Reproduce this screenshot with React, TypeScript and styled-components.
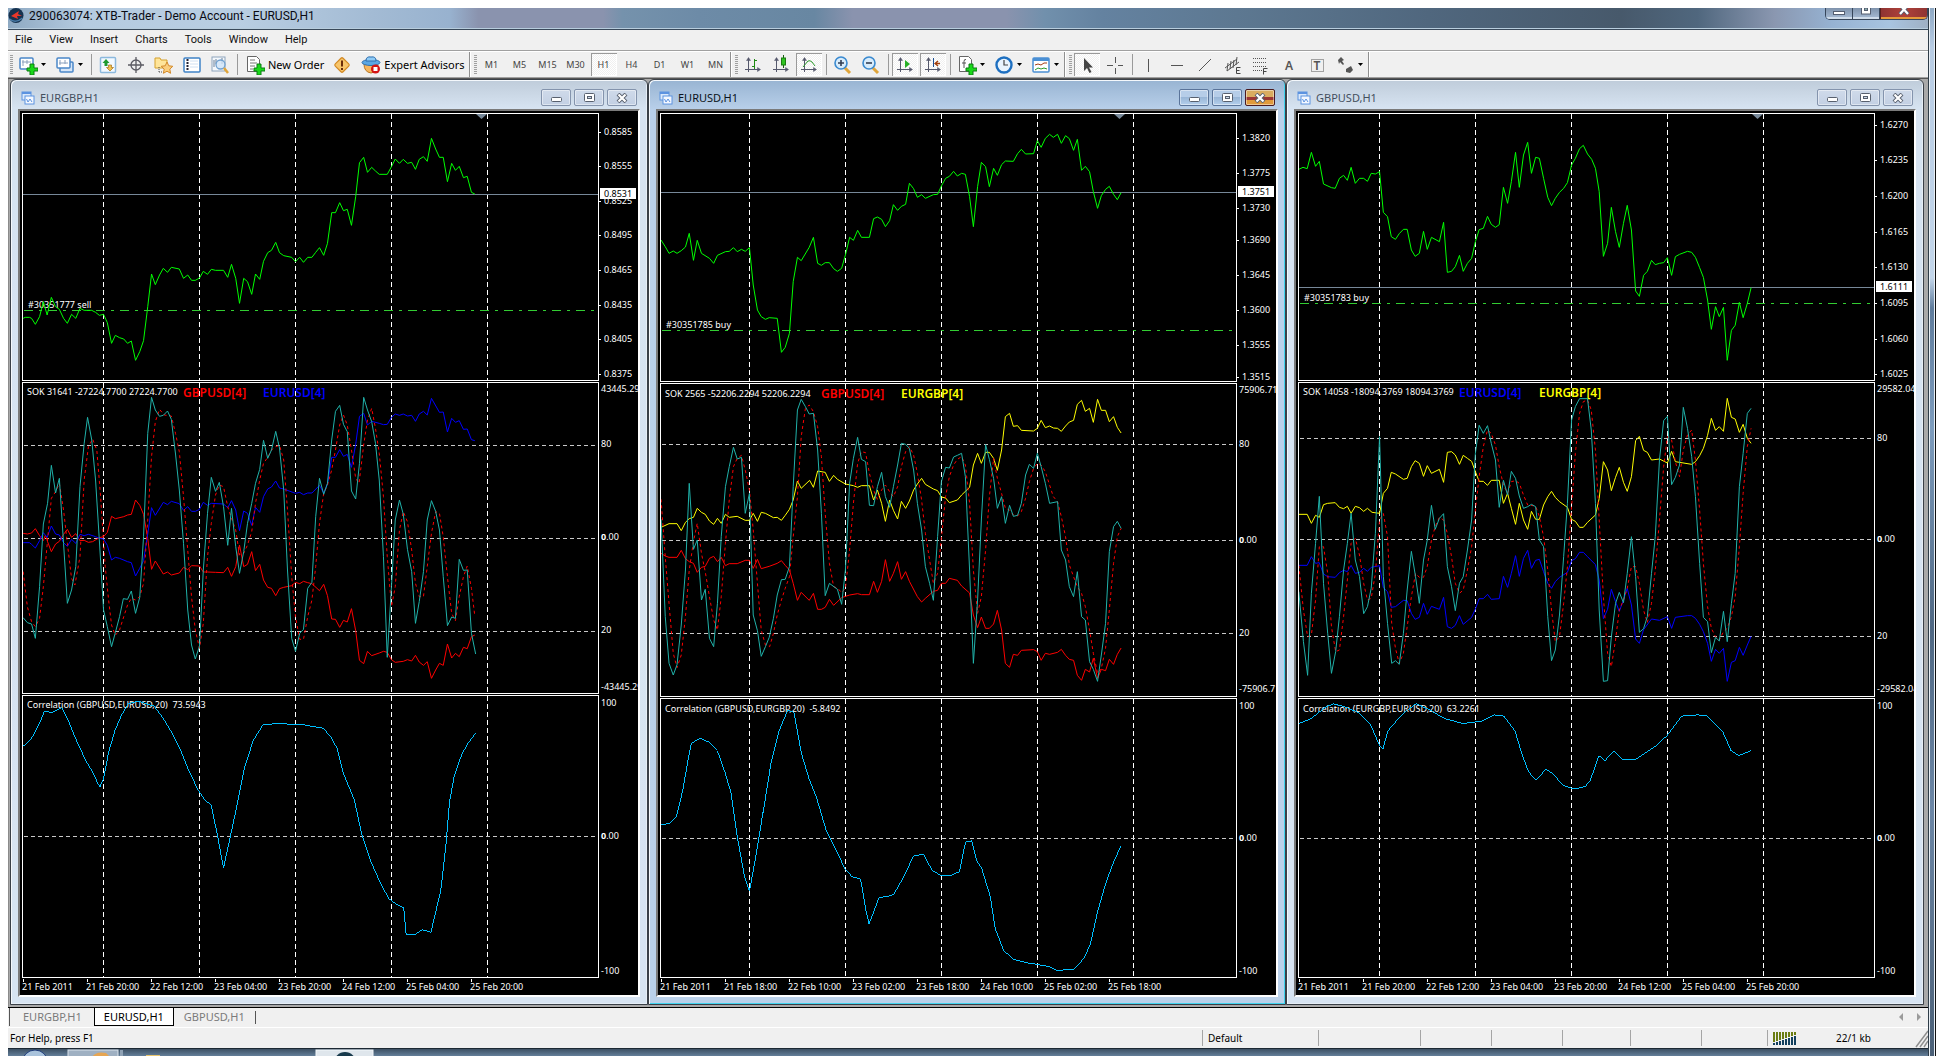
import React from 'react';
import styled, { createGlobalStyle, css } from 'styled-components';

const UI = '"Noto Sans", "Open Sans", sans-serif';

const GlobalStyle = createGlobalStyle`
  * { box-sizing: border-box; }
  body { margin: 0; background: #fff; font-family: ${UI}; overflow: hidden; }
  button { font: inherit; color: inherit; margin: 0; padding: 0; border: 0; background: none; }
`;

/* ---------- window shell ---------- */

const Page = styled.div`
  display: flex;
  padding: 8px 0 0 8px;
`;

const Main = styled.main`
  flex: 1;
  min-width: 0;
  display: flex;
  flex-direction: column;
`;

const Edge = styled.div`
  width: 8px;
  border-left: 1px solid #2f3d48;
  border-right: 1px solid #111;
  background: linear-gradient(#8fa9c4 0, #b9cde4 40px, #c3d6ea 270px, #5f7c9c 300px, #7e9dbe 420px, #4f6883 620px, #6c87a6 800px, #4b6077 100%);
  box-shadow: inset 1px 0 #e9eff5, inset -1px 0 #e9eff5;
`;

const TitleBar = styled.header`
  display: flex;
  justify-content: space-between;
  align-items: flex-start;
  height: 22px;
  border-bottom: 1px solid #39495a;
  box-shadow: inset 0 -1px #b8cddd;
  background: linear-gradient(90deg, #8ea9c2 0, #b5cbe0 4%, #b9cee2 12%, #a3bbd4 19%, #98b2cf 23%, #8a93ae 24.5%, #8a93ae 31%, #7592ac 32%, #6d8ba7 36%, #6887a2 42%, #8a93ae 44%, #8a93ae 52%, #7190ac 54%, #6482a0 57%, #5d7891 64%, #50677e 74%, #47596b 84%, #50677e 88%, #8a97b0 92%, #96b2d2 95%, #a8c4e0 98%, #9fb0c4 100%);
`;

const AppTitle = styled.h1`
  display: flex;
  align-items: center;
  gap: 4px;
  margin: 0;
  height: 15px;
  font: 400 12px Roboto, "Noto Sans", sans-serif;
  color: #0a0a12;
`;

const WindowButtons = styled.div`
  display: flex;
  height: 12px;
  border: 1px solid #37465a;
  border-top: 0;
  border-radius: 0 0 5px 5px;
  overflow: hidden;
`;

const FrameButton = styled.button<{ $close?: boolean }>`
  display: flex;
  justify-content: center;
  width: ${p => (p.$close ? 47 : 27)}px;
  border-left: ${p => (p.$close ? 1 : 0)}px solid #5b1f1c;
  border-right: ${p => (p.$close ? 0 : 1)}px solid #37465a;
  background: ${p => (p.$close ? 'linear-gradient(90deg, #8f3432, #b0413a 50%, #8f3432)' : 'linear-gradient(#7f93ac, #a9bdd6)')};
  box-shadow: inset 0 -2px ${p => (p.$close ? '#e59a3a' : '#cfdcea')};
`;

const MenuBar = styled.nav`
  display: flex;
  height: 22px;
  padding: 0 0 2px 7px;
  background: #f0f0f0;
  border-bottom: 1px solid #fff;
  box-shadow: inset 0 -1px #a0a0a0;
`;

const MenuItem = styled.button`
  margin-right: 16px;
  padding-right: 1px;
  font: 11px/20px Roboto, "Noto Sans", sans-serif;
  color: #111;
`;

/* ---------- toolbar ---------- */

const ToolBar = styled.div`
  display: flex;
  align-items: center;
  height: 27px;
  background: #f0f0f0;
  border-bottom: 1px solid #555;
  box-shadow: inset 0 -1px #a0a0a0;
  padding-bottom: 1px;
`;

const Grip = styled.span`
  width: 6px;
  height: 20px;
  flex: none;
  background: repeating-linear-gradient(#a0a0a0 0 1px, #f0f0f0 1px 2px) 2px 0 / 3px 100% no-repeat;
`;

const Divider = styled.span`
  width: 6px;
  height: 21px;
  flex: none;
  background: linear-gradient(#9a9a9a, #9a9a9a) 3px 0 / 1px 100% no-repeat;
`;

const GroupEnd = styled.span`
  width: 3px;
  height: 25px;
  flex: none;
  border-left: 1px solid #8f8f8f;
  box-shadow: inset 1px 0 #fff;
`;

const pressed = css`
  background: repeating-conic-gradient(#fff 0 25%, #f0f0f0 0 50%) 0 0 / 2px 2px;
  box-shadow: inset 1px 1px #9a9a9a, inset -1px -1px #fff;
`;

const Tool = styled.button<{ $on?: boolean }>`
  display: flex;
  align-items: center;
  justify-content: center;
  flex: none;
  width: 26px;
  height: 23px;
  margin: 0 1px;
  ${p => p.$on && pressed}
`;

const Period = styled(Tool)`
  font-size: 9px;
  color: #444;
`;

const DropTool = styled.button`
  display: flex;
  align-items: center;
  flex: none;
  gap: 3px;
  width: 37px;
  height: 23px;
  padding-left: 4px;
`;

const LabelTool = styled.button`
  display: flex;
  align-items: center;
  flex: none;
  gap: 3px;
  height: 23px;
  padding: 0 4px 0 5px;
  font-size: 11px;
  color: #000;
`;

/* ---------- chart windows ---------- */

const Desk = styled.section`
  display: grid;
  grid-template-columns: repeat(3, minmax(0, 1fr));
  padding: 0 4px 2px 2px;
  background: linear-gradient(90deg, #8b8b8b 1px, transparent 1px), linear-gradient(#a9a9a9, #a9a9a9);
`;

const ChartWindow = styled.article<{ $active?: boolean }>`
  padding: 0 7px 7px;
  border: 1px solid #3a4048;
  border-radius: 6px 6px 0 0;
  background: ${p => (p.$active
    ? 'linear-gradient(#98b4d2 0, #b9d0ea 30px, #bad1ea 100%)'
    : 'linear-gradient(#bfccda 0, #d6e3f1 28px, #d7e4f2 100%)')};
  box-shadow: inset 1px 1px #f4f8fc, inset -1px -1px ${p => (p.$active ? '#3fd4ee' : '#e6eef6')};
`;

const ChartHeader = styled.header`
  display: flex;
  align-items: center;
  gap: 3px;
  height: 29px;
  padding: 6px 3px 0 3px;
`;

const ChartTitle = styled.h2<{ $active?: boolean }>`
  flex: 1;
  margin: 0;
  padding-left: 2px;
  font-size: 11px;
  line-height: 16px;
  font-weight: 400;
  color: ${p => (p.$active ? '#0b1320' : '#44505e')};
`;

const MdiButton = styled.button<{ $tone: 'idle' | 'live' | 'close' }>`
  display: flex;
  align-items: center;
  justify-content: center;
  width: 30px;
  height: 17px;
  border: 1px solid ${p => (p.$tone === 'close' ? '#4a1a20' : p.$tone === 'live' ? '#5a749a' : '#8494ad')};
  border-radius: 2px;
  background: ${p => (p.$tone === 'close'
    ? 'linear-gradient(#d9ac60 0 45%, #9c3733 45% 68%, #e09a3c 68%)'
    : p.$tone === 'live'
      ? 'linear-gradient(#b6cde8 0 48%, #98b5d6 48%, #b4cfec)'
      : 'linear-gradient(#cfdaea, #c3d0e3)')};
  box-shadow: inset 0 0 0 1px rgba(255, 255, 255, 0.45);
`;

const Client = styled.div`
  display: flex;
  flex-direction: column;
  gap: 1px;
  padding: 2px 0 0 2px;
  background: #000;
  border: 2px solid;
  border-color: #7a7a7a #fff #fff #7a7a7a;
`;

const Panel = styled.div<{ $h: number }>`
  display: grid;
  grid-template-columns: minmax(0, 1fr) 39px;
  height: ${p => p.$h}px;
`;

const Plot = styled.svg`
  display: block;
  width: 100%;
  height: 100%;
  border: 1px solid #fff;
`;

const Axis = styled.svg`
  display: block;
  width: 39px;
  height: 100%;
`;

const Small = styled.text<{ $dark?: boolean }>`
  font: 9px ${UI};
  fill: ${p => (p.$dark ? '#000' : '#fff')};
`;

const Legend = styled.text`
  font: 600 12px ${UI};
`;

const DateRow = styled.div`
  display: flex;
  height: 16px;
  font-size: 9px;
  line-height: 16px;
  color: #fff;
`;

const DateLabel = styled.span`
  width: 64px;
  white-space: nowrap;
  background: linear-gradient(#fff, #fff) 1px 0 / 1px 3px no-repeat;
`;

/* ---------- bottom ---------- */

const Tabs = styled.nav`
  display: flex;
  align-items: flex-start;
  height: 21px;
  padding-left: 1px;
  border-top: 1px solid #000;
  border-bottom: 1px solid #fff;
  background: #f0f0f0;
`;

const Tab = styled.button<{ $active?: boolean }>`
  height: 18px;
  padding: 0 10px 2px;
  font-size: 11px;
  line-height: 15px;
  color: #7b7b7b;
  &:first-child { padding: 0 12px 2px 13px; border-left: 1px solid #555; }
  ${p => p.$active && css`
    color: #000;
    background: #fff;
    border: solid #000;
    border-width: 0 1px 1px;
    padding: 0 9px 1px;
  `}
`;

const TabLine = styled.span`
  width: 1px;
  height: 13px;
  margin: 3px auto 0 0;
  background: #555;
`;

const TabScroll = styled.div`
  display: flex;
  gap: 9px;
  padding: 5px 5px 0 0;
  button { display: flex; }
`;

const StatusBar = styled.footer`
  display: flex;
  align-items: center;
  height: 21px;
  background: #f0f0f0;
  font-size: 10px;
  color: #000;
  border-bottom: 1px solid #1c2833;
`;

const StatusCell = styled.div<{ $w: number }>`
  display: flex;
  align-items: center;
  width: ${p => p.$w}px;
  height: 16px;
  padding-left: 5px;
  border-left: 1px solid #a5a5a5;
`;

const StatusHint = styled.div`
  flex: 1;
  padding-left: 2px;
`;

const Traffic = styled.span`
  margin-left: 38px;
`;

const TaskBar = styled.div`
  display: flex;
  height: 8px;
  overflow: hidden;
  background: linear-gradient(#3c5063, #6985a1);
`;

/* ---------- icons ---------- */

const Svg = ({ children, w = 20, h = 20 }: { children: React.ReactNode; w?: number; h?: number }) => (
  <svg width={w} height={h} viewBox={`0 0 ${w} ${h}`} fill="none" aria-hidden="true">{children}</svg>
);

const Plus = () => <path d="M12 9h4v4h4v3h-4v4h-4v-4H9v-3h3z" fill="#19d819" stroke="#0b7d12" />;
const AxisArrows = () => (
  <g stroke="#55586c"><path d="M5.500 3v14M2 14.500h15" /><path d="M3.500 5.500l2-3 2 3zM14.500 12.500l3 2-3 2z" fill="#55586c" strokeWidth=".5" /></g>
);
const Caret = () => <svg width="5" height="3" aria-hidden="true"><path d="M0 0h5L2.500 3z" fill="#000" /></svg>;

const icons: Record<string, React.ReactNode> = {
  newChart: <><rect x="2" y="3" width="13" height="11" rx="1" fill="#fff" stroke="#4a86c8" strokeWidth="1.500" /><path d="M5 5v6M4 7h9M9 5v4" stroke="#8aa0bd" /><Plus /></>,
  profiles: <><rect x="5" y="7" width="13" height="10" rx="1" fill="#d6e6f8" stroke="#4a86c8" strokeWidth="1.500" /><rect x="2" y="3" width="13" height="10" rx="1" fill="#fff" stroke="#4a86c8" strokeWidth="1.500" /><path d="M5 5v5M4 8h9M10 5v4" stroke="#8aa0bd" /></>,
  market: <><rect x="2.500" y="2.500" width="15" height="15" rx="1" fill="#f2f9ff" stroke="#8cb9dd" strokeWidth="1.500" /><path d="M8 4l3.500 4H9.500v3h-3V8h-2z" fill="#1c9a2e" /><path d="M12 16l-3.500-3.500h2V10h3v2.500h2z" fill="#f2c14e" stroke="#a5701a" strokeWidth=".7" /></>,
  cross: <g stroke="#5b5b63" strokeWidth="1.300"><circle cx="10" cy="10" r="5" /><path d="M10 2v16M2 10h16" /></g>,
  navigator: <><path d="M1 3h5l1 2h6v8H1z" fill="#ffe59a" stroke="#d5a12d" /><path d="M5 12v5M5 17h3" stroke="#555" strokeDasharray="1 1" /><path d="M13 7l1.800 3.800 4 .5-3 2.800.8 4.200-3.600-2.100-3.600 2.100.8-4.200-3-2.800 4-.5z" fill="#fbcf7e" stroke="#d38a2b" /></>,
  terminal: <><rect x="2" y="3" width="16" height="14" rx="1" fill="#fff" stroke="#3f82c6" strokeWidth="1.500" /><path d="M5.500 4v12" stroke="#222233" strokeWidth="2" strokeDasharray="2 1" /><path d="M8 6h8M8 9h8M8 12h8" stroke="#cfe0f2" /></>,
  tester: <><rect x="2" y="2" width="13" height="14" fill="#f4f8fc" stroke="#8ea4bb" /><path d="M4 5v7M6 4v5M12 3v6" stroke="#6c8098" /><circle cx="10.500" cy="9.500" r="4.500" fill="#cfe4f8cc" stroke="#6fa0cf" strokeWidth="1.300" /><path d="M14 13l4 5" stroke="#e0a53a" strokeWidth="2.500" /></>,
  order: <><path d="M2.500 1.500h9l3 3v12h-12z" fill="#fff" stroke="#666" /><path d="M5 5h5M5 8h7M5 11h5M5 14h3" stroke="#777" /><Plus /></>,
  warn: <><rect x="4.500" y="4.500" width="11" height="11" rx="1.500" transform="rotate(45 10 10)" fill="#f8c56a" stroke="#d28a25" strokeWidth="1.200" /><path d="M10 5.500v6M10 13v2" stroke="#6b2d0a" strokeWidth="2" /></>,
  expert: <><path d="M3 9q0 8 7 9 6-1 7-8z" fill="#f6b55c" stroke="#b97620" /><ellipse cx="10" cy="7.500" rx="9" ry="3" fill="#5aa7e4" stroke="#2f6fae" /><path d="M5 6q0-5 5-4 5-1 5 4z" fill="#8ecbf6" stroke="#2f6fae" /><circle cx="14.500" cy="14" r="4.500" fill="#d41414" /><rect x="12.500" y="12" width="4" height="4" fill="#fff" /></>,
  bars: <><AxisArrows /><path d="M11.500 4v10M9 11.500h2.500M11.500 5.500H14" stroke="#1f8a12" /></>,
  candles: <><AxisArrows /><path d="M12.500 0v13" stroke="#1a5e10" /><rect x="10.500" y="3" width="4" height="7" fill="#2fc421" stroke="#1a7a10" /></>,
  line: <><AxisArrows /><path d="M4 12l5-6q2-1 4 1l3 4" stroke="#2c9a2c" /></>,
  zoomIn: <><path d="M11 12l6 6" stroke="#e0a53a" strokeWidth="3" /><circle cx="8" cy="8" r="6" fill="#d8ecfb" stroke="#3a8ad0" strokeWidth="1.600" /><path d="M8 5v6M5 8h6" stroke="#333f55" strokeWidth="1.600" /></>,
  zoomOut: <><path d="M11 12l6 6" stroke="#e0a53a" strokeWidth="3" /><circle cx="8" cy="8" r="6" fill="#d8ecfb" stroke="#3a8ad0" strokeWidth="1.600" /><path d="M5 8h6" stroke="#333f55" strokeWidth="1.600" /></>,
  scroll: <><AxisArrows /><path d="M10 5l5 4-5 4z" fill="#27b027" /></>,
  shift: <><AxisArrows /><path d="M10.500 3v9" stroke="#1c4f94" /><path d="M17 8.500h-4M15 6l-3 2.500 3 2.500" stroke="#a3400c" strokeWidth="1.300" /></>,
  indicators: <><path d="M2.500 1.500h9l3 3v12h-12z" fill="#fff" stroke="#666" /><path d="M9 4.500q-2-.5-2 2V13M5 8h4" stroke="#555" /><Plus /></>,
  clock: <><circle cx="10" cy="10" r="7.500" fill="#e9f4fd" stroke="#1d6fc0" strokeWidth="2.400" /><path d="M10 5v5h4" stroke="#444" strokeWidth="1.200" /></>,
  template: <><rect x="2" y="3" width="16" height="14" rx="1" fill="#fff" stroke="#4a8fd4" strokeWidth="1.500" /><path d="M2 4.500h16" stroke="#4a8fd4" strokeWidth="3" /><path d="M4 10l3-1 3 1 3-2 3 0" stroke="#a23c16" /><path d="M4 15l3-2 3 1 3-1 3 1" stroke="#2a9a2a" /></>,
  cursor: <path d="M7 3v13l3-3 2.500 5 2-1-2.500-4.500h4z" fill="#444" />,
  crosshair: <path d="M10.500 2v6M10.500 13v6M2 10.500h6M13 10.500h5" stroke="#555" />,
  vline: <path d="M9.500 4v13" stroke="#555" />,
  hline: <path d="M4 10.500h12" stroke="#555" />,
  trend: <path d="M4 16L16 4" stroke="#555" />,
  channel: <><path d="M2 13l12-9M4 16l12-9M5 8l-1 8M8 6L7 14M11 5l-1 8M14 2l-1 8" stroke="#555" /><path d="M17.500 12.500h-4v6h4M13.500 15.500h3" stroke="#444" /></>,
  fibo: <><path d="M2 3.500h14M2 7.500h14M2 11.500h14M2 15.500h9" stroke="#555" strokeDasharray="1 1" /><path d="M16.500 13.500h-4v6M12.500 16.500h3" stroke="#444" /></>,
  arrows: <path d="M3 5l3-3 3 3-2 1 2 3-1 1-3-3-1 2zM11 14l5-3 2 4-3 3-4-1zM9 10l4 4" fill="#555" />,
};

const Icon = ({ n }: { n: string }) => <Svg>{icons[n]}</Svg>;
const T = ({ n, on }: { n: string; on?: boolean }) => <Tool $on={on} aria-label={n}><Icon n={n} /></Tool>;
const D = ({ n }: { n: string }) => <DropTool aria-label={n}><Icon n={n} /><Caret /></DropTool>;

const LetterTool = ({ boxed }: { boxed?: boolean }) => (
  <Tool aria-label={boxed ? 'Text label' : 'Text'}>
    <Svg>
      {boxed && <rect x="4.500" y="4.500" width="12" height="12" stroke="#555" strokeDasharray="1 1" />}
      <text x="10" y="14.500" textAnchor="middle" fontFamily="Noto Sans" fontSize="12" fontWeight="600" fill="#555">{boxed ? 'T' : 'A'}</text>
    </Svg>
  </Tool>
);

const ChartIcon = () => (
  <Svg w={14} h={14}>
    <rect x="1" y="1" width="9" height="8" fill="#dbe9fb" stroke="#5c93e0" />
    <path d="M1 2h9" stroke="#5c93e0" strokeWidth="2" />
    <rect x="4" y="5" width="9" height="8" fill="#f4f8ff" stroke="#5c93e0" />
    <path d="M5.500 8l1.500 3 2-3 2 3" stroke="#5c93e0" />
  </Svg>
);

const MinGlyph = () => <Svg w={11} h={9}><rect x=".5" y="4.500" width="10" height="4" rx="1" fill="#fff" stroke="#58606e" /></Svg>;
const MaxGlyph = () => <Svg w={11} h={9}><rect x=".5" y=".5" width="10" height="8" rx="1" fill="#fff" stroke="#58606e" /><rect x="3.500" y="3.500" width="4" height="2" fill="#ccd8e8" stroke="#58606e" /></Svg>;
const CloseGlyph = () => <Svg w={12} h={10}><path d="M2 1l8 8M10 1L2 9" stroke="#58606e" strokeWidth="4" /><path d="M2.500 1.500l7 7M9.500 1.500l-7 7" stroke="#fff" strokeWidth="2.200" /></Svg>;

/* ---------- chart data ---------- */

type Series = { color: string; dash?: string; pts: string };
type Trace = { dx: number; dy: number; sx: number; sy: number };
type Mark = { y: number; t: string };
type PanelData = {
  h: number;
  trace: Trace;
  series: Series[];
  levels?: number[];
  caption?: Mark;
  legend?: { x: number; t: string; color: string }[];
  order?: Mark;
  price?: { line: number; y: number; t: string };
  labels: Mark[];
  zero?: number;
};
type Chart = { name: string; active?: boolean; grid: number; dates: string[]; panels: PanelData[] };

const LIME = '#00ff00';
const RED = '#ff0000';
const BLUE = '#0000ff';
const YELLOW = '#ffff00';
const TEAL = '#20b2aa';
const SKY = '#00bfff';
const GUIDE = '#778899';

const SX = 0.42093;
const SX3 = 0.41837;
const SY = 1 / 3;
const S3 = 1.2347;

const charts: Chart[] = [
  {
    name: 'EURGBP,H1',
    grid: 80.5,
    dates: ['21 Feb 2011', '21 Feb 20:00', '22 Feb 12:00', '23 Feb 04:00', '23 Feb 20:00', '24 Feb 12:00', '25 Feb 04:00', '25 Feb 20:00'],
    panels: [
      {
        h: 268,
        trace: { dx: -23, dy: -14, sx: SX, sy: SY },
        order: { y: 196.5, t: '#30351777 sell' },
        price: { line: 80.5, y: 81, t: '0.8531' },
        labels: [{ y: 19, t: '0.8585' }, { y: 53, t: '0.8555' }, { y: 88, t: '0.8525' }, { y: 122, t: '0.8495' }, { y: 157, t: '0.8465' }, { y: 192, t: '0.8435' }, { y: 226, t: '0.8405' }, { y: 261, t: '0.8375' }],
        series: [{ color: LIME, pts: '55,655 60,652 70,652 75,655 84,673 94,650 103,605 112,645 122,592 132,620 141,628 151,655 160,670 170,643 180,655 190,625 200,631 218,631 227,637 236,646 246,643 255,668 265,730 274,706 284,713 294,717 303,730 312,723 322,781 332,755 341,722 351,620 360,522 369,554 379,525 388,505 398,517 407,502 426,507 436,535 446,525 455,541 464,541 474,534 483,514 493,523 502,508 512,511 531,511 541,532 550,493 560,535 569,610 579,535 588,545 598,583 607,522 617,538 626,484 636,458 645,451 655,427 664,458 674,467 693,472 702,485 712,472 721,487 731,472 741,472 750,457 759,443 769,466 778,430 788,338 797,338 807,308 816,332 825,328 835,376 845,290 854,188 864,172 873,217 883,202 892,213 901,223 920,223 930,200 939,177 949,190 958,178 968,190 978,187 987,208 996,178 1006,170 1015,184 1025,115 1035,147 1044,172 1053,172 1063,245 1073,190 1082,211 1091,199 1101,233 1110,229 1120,277 1128,282' }],
      },
      {
        h: 312,
        trace: { dx: -23, dy: -13, sx: SX, sy: SY },
        levels: [62.5, 155.5, 248.5],
        caption: { y: 9, t: 'SOK 31641 -27224.7700 27224.7700' },
        legend: [{ x: 160, t: 'GBPUSD[4]', color: RED }, { x: 240, t: 'EURUSD[4]', color: BLUE }],
        labels: [{ y: 7, t: '43445.29' }, { y: 62, t: '80' }, { y: 248, t: '20' }, { y: 305, t: '-43445.29' }],
        zero: 155,
        series: [
          { color: RED, pts: '55,490 65,492 75,489 84,476 94,497 103,512 108,495 113,515 122,545 132,522 141,514 151,493 160,478 170,502 180,491 190,512 200,511 210,517 220,515 236,503 246,500 255,487 265,439 274,446 294,440 303,435 312,433 322,390 332,406 341,433 351,505 360,598 369,573 388,612 398,606 407,615 426,609 436,592 446,599 455,587 474,588 483,606 493,606 512,607 531,608 541,592 550,619 560,590 569,525 579,590 588,583 598,545 607,602 617,583 626,630 636,652 645,655 655,677 664,656 674,652 693,647 702,637 712,641 721,634 731,638 741,641 759,662 769,643 778,677 788,747 797,748 807,772 816,751 825,756 835,716 845,782 854,871 864,881 873,844 883,857 901,849 911,844 920,847 930,869 939,877 958,874 968,869 978,873 987,856 996,876 1006,886 1015,875 1025,925 1035,900 1044,880 1053,886 1063,822 1073,864 1082,850 1091,860 1101,832 1110,836 1120,800 1128,795' },
          { color: BLUE, pts: '55,518 70,518 75,523 84,534 94,512 103,488 112,502 122,468 132,492 141,495 151,518 160,529 170,508 180,520 190,493 200,497 210,493 227,500 236,505 246,507 255,526 265,570 274,562 284,565 303,575 312,578 322,618 332,595 341,572 351,492 360,413 369,436 388,397 398,404 407,394 426,401 436,421 446,410 455,424 464,424 474,418 483,397 493,406 502,400 531,402 541,413 550,392 560,420 569,482 579,423 588,430 598,466 607,412 617,427 626,380 636,357 645,351 655,333 664,354 674,357 702,370 712,367 721,374 731,369 741,369 759,346 769,369 778,342 788,262 797,262 807,239 816,259 825,253 835,292 845,223 854,139 864,130 873,165 883,154 901,160 911,164 920,163 930,142 939,132 949,136 958,132 968,138 978,136 987,154 996,132 1006,124 1015,135 1025,85 1044,127 1053,126 1063,186 1073,145 1082,157 1091,152 1101,178 1110,177 1120,209 1128,212' },
          { color: RED, dash: '3 3', pts: '55,605 65,710 75,755 84,770 94,745 103,650 113,510 122,385 132,365 141,340 151,420 160,520 170,625 178,645 190,560 200,330 210,230 220,207 230,240 239,380 250,590 258,690 265,765 274,796 284,780 294,740 303,705 312,685 322,690 332,680 341,640 351,450 360,260 369,155 379,118 390,135 407,138 417,190 426,245 436,380 446,540 455,680 464,780 474,835 483,760 493,560 502,460 512,375 521,345 531,350 541,410 550,445 560,480 569,555 579,550 588,525 598,485 607,400 617,330 626,280 636,262 645,240 655,230 664,226 674,270 683,420 693,620 702,740 712,808 721,808 731,740 741,690 750,590 759,460 769,370 778,345 788,300 797,240 807,165 816,135 825,165 835,240 845,325 853,340 864,225 873,150 883,115 892,175 901,250 911,380 920,560 930,710 939,650 949,480 958,425 968,455 978,540 987,640 996,680 1006,680 1015,590 1025,490 1035,425 1044,430 1053,500 1063,620 1073,730 1082,752 1091,680 1101,620 1110,588 1120,655 1128,738' },
          { color: TEAL, pts: '55,743 65,758 75,762 84,805 94,650 103,462 113,400 122,286 132,369 141,325 151,520 160,700 170,660 180,590 190,350 200,220 208,142 218,210 227,330 236,510 246,720 255,770 265,830 274,788 284,740 293,686 303,688 312,663 322,730 332,682 341,500 351,190 360,82 369,120 379,139 388,136 398,123 407,148 417,252 426,360 436,520 446,720 455,825 464,867 474,828 483,600 493,430 502,322 512,364 521,337 531,410 541,526 550,415 560,530 569,610 579,545 588,460 598,400 607,340 617,298 626,211 636,265 645,240 655,184 664,234 674,360 683,600 693,805 702,844 712,790 721,778 731,655 741,637 750,440 759,325 769,373 778,340 788,210 797,124 807,106 816,163 825,185 835,363 845,387 854,280 864,82 873,120 883,155 892,220 901,330 911,560 920,862 930,650 939,450 949,390 958,432 968,538 978,605 987,760 996,695 1006,605 1015,450 1025,392 1035,424 1044,480 1053,620 1063,767 1073,741 1082,745 1091,568 1101,601 1110,600 1120,790 1130,852' },
        ],
      },
      {
        h: 283,
        trace: { dx: -23, dy: -696, sx: S3, sy: S3 },
        levels: [140.5],
        caption: { y: 9, t: 'Correlation (GBPUSD,EURUSD,20)  73.5943' },
        labels: [{ y: 8, t: '100' }, { y: 276, t: '-100' }],
        zero: 141,
        series: [{ color: SKY, pts: '18,605 25,599 32,586 36,576 42,577 50,573 55,583 62,600 70,617 76,627 79,634 81,637 84,630 88,609 93,592 98,580 104,570 112,568 125,572 133,583 140,595 146,607 152,622 160,639 166,648 171,652 176,676 181,703 186,680 192,652 198,622 205,600 213,587 225,586 245,587 262,590 268,597 273,606 278,626 287,648 293,676 300,697 308,715 315,728 322,733 327,735 329,757 336,757 342,753 349,755 357,721 361,686 364,650 368,628 374,611 379,602 385,594' }],
      },
    ],
  },
  {
    name: 'EURUSD,H1',
    active: true,
    grid: 88.5,
    dates: ['21 Feb 2011', '21 Feb 18:00', '22 Feb 10:00', '23 Feb 02:00', '23 Feb 18:00', '24 Feb 10:00', '25 Feb 02:00', '25 Feb 18:00'],
    panels: [
      {
        h: 269,
        trace: { dx: -21, dy: -14, sx: SX, sy: SY },
        order: { y: 216.5, t: '#30351785 buy' },
        price: { line: 78.5, y: 79, t: '1.3751' },
        labels: [{ y: 25, t: '1.3820' }, { y: 60, t: '1.3775' }, { y: 95, t: '1.3730' }, { y: 127, t: '1.3690' }, { y: 162, t: '1.3645' }, { y: 197, t: '1.3600' }, { y: 232, t: '1.3555' }, { y: 264, t: '1.3515' }],
        series: [{ color: LIME, pts: '50,420 60,440 69,460 79,453 88,460 98,452 108,441 117,400 127,481 136,421 146,460 165,475 175,490 184,466 203,455 212,454 222,443 231,455 241,448 250,454 260,443 269,555 279,630 288,650 298,658 307,653 326,655 336,757 345,742 355,700 364,545 374,472 383,482 402,442 412,412 422,490 431,496 440,488 450,488 460,506 469,514 479,505 488,465 498,412 507,421 517,391 526,412 545,412 555,356 564,351 574,358 583,380 593,362 602,314 612,331 621,319 631,313 640,250 650,266 659,292 669,284 678,295 697,284 707,283 716,258 726,235 735,229 745,214 754,228 764,220 773,223 783,290 792,380 802,260 811,187 821,200 830,260 840,205 849,226 859,194 868,183 887,184 897,161 906,148 916,162 935,161 944,122 953,142 963,115 973,103 982,112 992,103 1001,130 1011,107 1020,116 1030,151 1039,118 1049,211 1058,199 1068,215 1077,275 1087,325 1096,287 1106,268 1115,259 1125,283 1134,299 1143,278' }],
      },
      {
        h: 314,
        trace: { dx: -21, dy: -14, sx: SX, sy: SY },
        levels: [60.5, 156.5, 249.5],
        caption: { y: 10, t: 'SOK 2565 -52206.2294 52206.2294' },
        legend: [{ x: 160, t: 'GBPUSD[4]', color: RED }, { x: 240, t: 'EURGBP[4]', color: YELLOW }],
        labels: [{ y: 7, t: '75906.71' }, { y: 61, t: '80' }, { y: 250, t: '20' }, { y: 306, t: '-75906.71' }],
        zero: 157,
        series: [
          { color: YELLOW, pts: '50,472 69,461 88,461 98,482 108,457 117,446 127,442 136,415 146,427 155,433 165,453 175,463 184,445 193,460 203,433 212,442 231,439 250,451 260,451 269,430 279,454 288,427 298,430 317,443 326,442 336,451 345,436 355,418 364,390 374,333 383,355 403,331 412,352 422,303 440,307 450,334 460,316 469,328 488,342 507,347 517,352 526,347 545,347 555,390 564,360 574,400 583,454 593,390 602,421 612,447 621,394 631,415 640,393 650,360 659,342 669,325 678,343 697,357 707,362 716,381 726,384 735,398 754,390 764,375 783,352 792,285 802,250 811,280 821,247 830,247 840,265 849,301 859,240 868,140 878,130 887,169 897,167 906,181 935,183 944,175 953,151 963,173 973,168 982,174 992,175 1001,184 1011,168 1020,156 1030,151 1039,103 1049,91 1058,124 1068,115 1077,157 1087,88 1096,121 1106,121 1115,155 1125,140 1134,172 1143,189' },
          { color: RED, pts: '50,550 60,558 69,562 88,562 98,541 108,566 117,575 127,580 136,607 146,592 155,589 165,565 175,559 184,575 193,562 203,587 212,581 231,581 250,571 260,571 269,595 279,568 288,596 307,589 326,580 336,572 345,586 355,600 364,640 374,691 383,667 402,691 412,670 422,718 431,718 440,712 450,688 460,706 479,683 498,675 517,671 526,674 545,674 555,634 564,667 574,634 583,569 593,634 602,610 612,575 621,628 631,605 640,634 659,680 669,696 678,685 697,664 707,661 716,640 726,640 735,625 754,631 764,648 783,669 792,735 802,773 811,741 821,775 830,775 840,762 849,721 859,780 868,880 878,892 887,853 897,856 906,841 935,839 944,845 953,871 963,850 973,853 992,847 1001,838 1011,856 1020,868 1030,871 1039,916 1049,931 1058,898 1068,906 1077,865 1087,925 1096,898 1106,902 1115,868 1125,883 1134,853 1143,834' },
          { color: RED, dash: '3 3', pts: '50,388 60,560 69,700 79,850 88,893 98,855 108,740 117,600 127,515 136,460 146,550 155,605 165,680 175,750 184,780 193,680 203,520 212,390 222,290 231,265 241,256 250,300 260,360 269,480 279,640 288,780 298,825 308,830 317,790 326,735 336,690 345,655 355,620 364,500 374,380 383,200 393,115 402,105 412,125 422,170 431,260 440,430 450,580 460,650 470,655 479,668 488,655 498,540 507,400 517,280 526,245 536,248 545,310 555,360 564,388 574,360 583,345 593,365 602,380 612,350 621,290 631,245 640,230 650,255 659,310 669,390 678,490 688,570 697,640 707,610 716,505 726,380 735,320 745,285 754,268 764,260 773,285 783,400 792,600 802,730 811,680 821,540 830,380 840,265 849,325 859,370 868,415 878,420 887,435 897,438 906,425 916,385 925,335 935,295 944,280 953,285 963,305 973,345 982,380 992,395 1001,440 1011,500 1020,585 1030,620 1039,650 1049,670 1058,710 1068,780 1077,850 1087,910 1096,895 1106,835 1115,720 1125,580 1134,500 1143,475' },
          { color: TEAL, pts: '50,448 60,740 69,880 79,915 88,884 98,765 108,600 117,340 127,538 136,510 146,690 155,658 165,805 175,830 184,700 193,500 203,350 212,290 222,232 231,267 241,262 250,430 260,370 269,735 279,782 288,859 298,830 307,802 317,745 326,675 336,629 345,628 355,590 364,350 374,120 383,88 393,110 402,132 412,130 422,240 431,430 440,677 450,640 469,658 479,703 488,600 498,340 507,265 517,202 526,268 536,275 545,406 555,407 564,350 574,307 583,380 593,412 602,350 612,285 621,220 631,223 640,235 650,300 659,400 669,480 678,590 688,640 697,691 707,500 716,335 726,292 735,294 745,261 754,256 764,250 773,320 783,600 792,880 802,690 811,450 821,224 830,268 840,325 849,415 859,380 868,460 878,406 887,439 897,436 906,400 916,315 925,283 935,295 944,250 953,290 963,340 973,400 992,395 1001,540 1011,570 1020,650 1030,680 1039,605 1049,740 1058,750 1068,875 1077,898 1087,934 1096,855 1106,760 1115,545 1125,470 1134,454 1143,475' },
        ],
      },
      {
        h: 280,
        trace: { dx: -661, dy: -699, sx: S3, sy: S3 },
        levels: [139.5],
        caption: { y: 10, t: 'Correlation (GBPUSD,EURGBP,20)  -5.8492' },
        labels: [{ y: 8, t: '100' }, { y: 273, t: '-100' }],
        zero: 140,
        series: [{ color: SKY, pts: '535,668 542,667 548,661 553,640 557,617 560,602 567,598 574,601 581,608 587,625 592,642 597,677 603,710 607,722 611,700 616,670 624,620 631,592 638,575 643,577 649,610 655,630 661,645 669,672 677,688 684,703 690,710 697,712 701,735 704,748 712,727 718,726 724,724 732,710 740,693 748,692 755,705 762,709 770,709 777,706 782,682 787,681 791,697 795,703 802,726 806,752 813,770 821,777 833,780 850,783 856,786 870,785 878,776 883,765 889,738 896,714 902,698 908,685' }],
      },
    ],
  },
  {
    name: 'GBPUSD,H1',
    grid: 80.5,
    dates: ['21 Feb 2011', '21 Feb 20:00', '22 Feb 12:00', '23 Feb 04:00', '23 Feb 20:00', '24 Feb 12:00', '25 Feb 04:00', '25 Feb 20:00'],
    panels: [
      {
        h: 268,
        trace: { dx: -19, dy: -14, sx: SX3, sy: SY },
        order: { y: 189.5, t: '#30351783 buy' },
        price: { line: 173.5, y: 174, t: '1.6111' },
        labels: [{ y: 12, t: '1.6270' }, { y: 47, t: '1.6235' }, { y: 83, t: '1.6200' }, { y: 119, t: '1.6165' }, { y: 154, t: '1.6130' }, { y: 190, t: '1.6095' }, { y: 226, t: '1.6060' }, { y: 261, t: '1.6025' }],
        series: [{ color: LIME, pts: '45,208 55,202 65,206 75,157 85,199 94,184 104,252 123,263 132,265 142,235 152,226 161,241 170,202 180,250 190,235 200,235 209,244 218,220 228,222 238,215 247,337 257,350 266,410 276,418 285,401 295,388 304,388 314,450 323,469 333,460 343,394 352,448 362,412 381,425 391,367 400,517 410,514 419,500 429,466 438,514 448,490 458,475 467,425 476,389 486,385 496,349 505,373 515,382 524,374 534,262 544,310 553,245 563,157 572,262 582,165 592,127 601,220 611,172 620,175 630,235 640,292 649,317 658,295 668,277 678,265 687,248 697,195 706,175 716,146 725,136 735,162 745,178 754,205 763,275 773,469 783,430 792,322 802,395 811,442 821,370 830,316 840,390 850,573 859,589 869,526 878,514 888,481 897,494 907,490 917,488 926,473 936,526 945,470 955,463 974,454 984,457 993,472 1003,503 1012,532 1022,600 1031,688 1041,620 1050,650 1060,622 1069,781 1079,691 1088,676 1098,607 1107,653 1117,610 1126,563' }],
      },
      {
        h: 315,
        trace: { dx: -19, dy: -13, sx: SX3, sy: SY },
        levels: [55.5, 156.5, 253.5],
        caption: { y: 9, t: 'SOK 14058 -18094.3769 18094.3769' },
        legend: [{ x: 160, t: 'EURUSD[4]', color: BLUE }, { x: 240, t: 'EURGBP[4]', color: YELLOW }],
        labels: [{ y: 7, t: '29582.04' }, { y: 56, t: '80' }, { y: 254, t: '20' }, { y: 307, t: '-29582.04' }],
        zero: 157,
        series: [
          { color: YELLOW, pts: '45,433 65,433 75,460 85,436 94,442 104,404 114,400 132,398 142,412 152,416 161,409 170,430 180,409 190,413 200,424 209,415 220,427 238,430 247,370 257,355 266,307 276,312 295,328 304,325 314,290 323,272 333,280 343,319 352,287 362,310 381,298 391,337 400,247 410,245 419,255 429,283 438,256 448,265 458,274 467,305 476,334 486,334 496,346 505,331 524,331 534,400 544,370 553,415 563,463 572,400 582,450 592,478 601,424 611,448 620,448 630,405 640,380 649,364 658,382 668,395 687,412 697,448 706,454 716,472 725,472 735,457 754,435 763,385 773,275 783,300 792,362 802,322 811,292 821,337 830,364 840,320 850,212 859,199 869,241 878,247 888,270 907,267 926,279 936,244 945,275 984,283 993,275 1003,257 1012,235 1022,196 1031,145 1041,181 1050,170 1060,184 1069,85 1079,142 1088,147 1098,187 1107,163 1117,205 1126,220' },
          { color: BLUE, pts: '45,586 65,586 75,560 85,580 94,578 104,612 114,620 132,622 142,608 152,601 161,605 170,586 180,610 190,607 200,595 209,604 218,592 238,587 247,653 257,665 266,712 276,710 295,691 304,692 314,730 323,748 333,742 343,700 352,733 362,709 381,718 391,682 400,770 410,775 419,766 429,737 438,763 458,742 467,717 476,686 486,686 496,673 505,688 524,686 534,619 544,652 553,610 563,557 572,619 582,565 592,541 601,595 611,571 620,568 630,605 640,640 649,655 658,635 668,622 687,607 697,572 706,566 716,547 725,547 735,560 754,584 763,630 773,746 783,718 792,658 802,695 811,724 821,690 830,655 840,705 850,807 859,820 869,779 888,747 907,751 926,740 936,775 945,742 974,737 984,737 993,745 1003,763 1012,785 1022,820 1031,874 1041,838 1050,850 1060,835 1069,934 1079,877 1088,872 1098,832 1107,856 1117,825 1126,799' },
          { color: RED, dash: '3 3', pts: '45,586 56,720 66,800 75,795 85,690 94,530 104,530 114,610 123,770 133,845 142,840 152,740 161,630 170,520 180,505 190,555 200,640 209,690 218,685 228,610 238,450 247,430 257,500 267,760 276,835 285,880 295,850 304,770 314,680 324,610 333,622 343,622 352,590 362,510 371,470 381,442 391,450 400,490 410,560 419,640 429,670 438,660 448,600 458,530 467,420 476,320 486,230 496,180 505,190 515,225 524,290 534,345 544,370 553,335 563,332 572,340 582,375 592,405 611,408 620,440 630,500 640,600 649,720 658,815 668,800 678,700 687,590 697,410 706,250 716,130 725,95 735,90 744,120 754,240 763,450 773,680 783,850 792,890 802,810 811,720 821,690 830,655 840,590 850,590 859,640 869,720 878,758 888,700 897,600 907,450 917,290 926,200 936,210 945,275 955,320 964,240 974,195 984,180 993,270 1003,420 1012,580 1022,710 1031,775 1041,800 1050,810 1060,785 1069,775 1079,740 1088,680 1098,530 1107,370 1117,230 1126,175' },
          { color: TEAL, pts: '45,665 56,815 66,916 75,670 85,520 94,379 104,640 114,790 123,910 133,845 142,740 152,600 161,520 170,430 180,570 190,620 200,731 209,710 218,655 228,490 238,200 247,620 257,760 267,880 276,872 285,883 295,790 304,660 314,544 324,620 333,700 343,570 352,510 362,406 371,478 381,445 391,431 400,590 410,650 419,722 429,640 438,620 448,540 458,450 467,250 476,166 486,190 496,167 505,220 515,270 524,412 534,331 544,375 553,304 563,325 572,378 582,415 592,410 601,403 611,410 620,510 630,530 640,740 649,872 658,840 668,735 678,560 687,400 697,150 706,110 716,86 735,86 744,180 754,400 763,720 773,934 783,932 792,800 802,700 811,667 821,698 830,610 840,500 850,620 859,787 869,776 878,740 888,610 897,500 907,270 917,152 926,139 936,344 945,322 955,285 964,112 974,175 984,260 993,380 1003,580 1012,742 1022,755 1031,848 1041,802 1050,813 1060,724 1069,815 1079,700 1088,610 1098,350 1107,250 1117,130 1126,115' },
        ],
      },
      {
        h: 280,
        trace: { dx: -1299, dy: -699, sx: S3, sy: S3 },
        levels: [139.5],
        caption: { y: 10, t: 'Correlation (EURGBP,EURUSD,20)  63.2261' },
        labels: [{ y: 8, t: '100' }, { y: 273, t: '-100' }],
        zero: 140,
        series: [{ color: SKY, pts: '1052,586 1062,582 1073,573 1080,570 1088,572 1100,577 1110,587 1117,603 1120,607 1124,592 1130,585 1140,575 1147,570 1158,575 1170,582 1185,586 1200,584 1210,579 1218,580 1227,592 1233,612 1238,625 1244,632 1252,623 1258,627 1266,636 1275,639 1284,637 1288,632 1295,612 1300,616 1307,608 1314,615 1325,615 1340,605 1350,596 1362,580 1375,579 1383,580 1395,592 1402,608 1408,612 1418,608' }],
      },
    ],
  },
];

const ChartPanel = ({ p, grid }: { p: PanelData; grid: number }) => (
  <Panel $h={p.h}>
    <Plot>
      <g shapeRendering="crispEdges">
        {[0, 1, 2, 3, 4].map(i => (
          <line key={i} x1={grid + i * 96} x2={grid + i * 96} y1="0" y2="100%" stroke="#fff" strokeDasharray="5 3" />
        ))}
        {p.levels?.map(y => <line key={y} x1="1" x2="100%" y1={y} y2={y} stroke="#c8c8c8" strokeDasharray="4 3" />)}
        {p.order && <line x1="1" x2="100%" y1={p.order.y} y2={p.order.y} stroke="#32cd32" strokeDasharray="9 6 3 6" />}
        {p.price && <line x1="0" x2="100%" y1={p.price.line} y2={p.price.line} stroke={GUIDE} />}
      </g>
      {p.price && <path d="M453 0h11l-5.500 5z" fill={GUIDE} />}
      {p.caption && <Small x="4" y={p.caption.y + 3} xmlSpace="preserve">{p.caption.t}</Small>}
      {p.legend?.map(l => <Legend key={l.t} x={l.x} y="14" fill={l.color}>{l.t}</Legend>)}
      {p.order && <Small x="5" y={p.order.y - 3}>{p.order.t}</Small>}
      <g transform={`translate(${p.trace.dx} ${p.trace.dy}) scale(${p.trace.sx} ${p.trace.sy})`} fill="none" shapeRendering="crispEdges">
        {p.series.map((s, i) => (
          <polyline key={i} points={s.pts} stroke={s.color} strokeDasharray={s.dash} vectorEffect="non-scaling-stroke" />
        ))}
      </g>
    </Plot>
    <Axis>
      {p.labels.map(l => (
        <g key={l.t}>
          {p.price && <line x1="0" x2="2" y1={l.y + 0.5} y2={l.y + 0.5} stroke="#fff" />}
          <Small x={p.price ? 5 : 2} y={l.y + 3}>{l.t}</Small>
        </g>
      ))}
      {p.zero && <Small x="2" y={p.zero + 3}><tspan fontWeight="700">0</tspan>.00</Small>}
      {p.price && (
        <>
          <rect x="1" y={p.price.y - 6} width="36" height="11" fill="#fff" />
          <Small $dark x="5" y={p.price.y + 3}>{p.price.t}</Small>
        </>
      )}
    </Axis>
  </Panel>
);

const periods = ['M1', 'M5', 'M15', 'M30', 'H1', 'H4', 'D1', 'W1', 'MN'];

export default function App() {
  return (
    <>
      <GlobalStyle />
      <Page>
        <Main>
          <TitleBar>
            <AppTitle>
              <Svg w={17} h={16}>
                <circle cx="8" cy="7.500" r="7.500" fill="#16324f" />
                <path d="M1.500 11q6 5 13-1" stroke="#4a7ca8" strokeWidth="1.500" />
                <path d="M3 8l8-5-1 3 4 2-5 0 1 3z" fill="#e8372a" />
              </Svg>
              290063074: XTB-Trader - Demo Account - EURUSD,H1
            </AppTitle>
            <WindowButtons>
              <FrameButton aria-label="Minimize"><Svg w={12} h={8}><rect x=".5" y="3.500" width="11" height="3" fill="#fff" stroke="#555e70" /></Svg></FrameButton>
              <FrameButton aria-label="Restore"><Svg w={12} h={8}><rect x="1.500" y="-3" width="9" height="9" fill="#fff" stroke="#555e70" /><rect x="4.500" y="0" width="3" height="2.500" fill="#8aa" stroke="#555e70" /></Svg></FrameButton>
              <FrameButton $close aria-label="Close"><Svg w={12} h={8}><path d="M2 -3l8 9M10 -3L2 6" stroke="#555e70" strokeWidth="4" /><path d="M2 -3l8 9M10 -3L2 6" stroke="#fff" strokeWidth="2.200" /></Svg></FrameButton>
            </WindowButtons>
          </TitleBar>

          <MenuBar>
            {['File', 'View', 'Insert', 'Charts', 'Tools', 'Window', 'Help'].map(m => <MenuItem key={m}>{m}</MenuItem>)}
          </MenuBar>

          <ToolBar>
            <Grip />
            <D n="newChart" /><D n="profiles" />
            <Divider />
            <T n="market" /><T n="cross" /><T n="navigator" /><T n="terminal" /><T n="tester" />
            <Divider />
            <LabelTool><Icon n="order" />New Order</LabelTool>
            <T n="warn" />
            <LabelTool><Icon n="expert" />Expert Advisors</LabelTool>
            <GroupEnd /><Grip />
            {periods.map(p => <Period key={p} $on={p === 'H1'}>{p}</Period>)}
            <GroupEnd /><Grip />
            <T n="bars" /><T n="candles" /><T n="line" on />
            <Divider />
            <T n="zoomIn" /><T n="zoomOut" />
            <Divider />
            <T n="scroll" on /><T n="shift" on />
            <Divider />
            <D n="indicators" /><D n="clock" /><D n="template" />
            <GroupEnd /><Grip />
            <T n="cursor" on /><T n="crosshair" />
            <Divider />
            <T n="vline" /><T n="hline" /><T n="trend" /><T n="channel" /><T n="fibo" />
            <LetterTool /><LetterTool boxed />
            <D n="arrows" />
            <GroupEnd />
          </ToolBar>

          <Desk>
            {charts.map(c => (
              <ChartWindow key={c.name} $active={c.active}>
                <ChartHeader>
                  <ChartIcon />
                  <ChartTitle $active={c.active}>{c.name}</ChartTitle>
                  <MdiButton $tone={c.active ? 'live' : 'idle'} aria-label="Minimize"><MinGlyph /></MdiButton>
                  <MdiButton $tone={c.active ? 'live' : 'idle'} aria-label="Maximize"><MaxGlyph /></MdiButton>
                  <MdiButton $tone={c.active ? 'close' : 'idle'} aria-label="Close"><CloseGlyph /></MdiButton>
                </ChartHeader>
                <Client>
                  {c.panels.map((p, i) => <ChartPanel key={i} p={p} grid={c.grid} />)}
                  <DateRow>{c.dates.map(d => <DateLabel key={d}>{d}</DateLabel>)}</DateRow>
                </Client>
              </ChartWindow>
            ))}
          </Desk>

          <Tabs>
            {charts.map(c => <Tab key={c.name} $active={c.active}>{c.name}</Tab>)}
            <TabLine />
            <TabScroll>
              <button aria-label="Scroll left"><Svg w={8} h={9}><path d="M5 0v8L1 4z" fill="#9a9a9a" /></Svg></button>
              <button aria-label="Scroll right"><Svg w={8} h={9}><path d="M2 0v8l4-4z" fill="#9a9a9a" /></Svg></button>
            </TabScroll>
          </Tabs>

          <StatusBar>
            <StatusHint>For Help, press F1</StatusHint>
            <StatusCell $w={116}>Default</StatusCell>
            <StatusCell $w={102} />
            <StatusCell $w={71} />
            <StatusCell $w={71} />
            <StatusCell $w={68} />
            <StatusCell $w={71} />
            <StatusCell $w={66} />
            <StatusCell $w={148}>
              <Svg w={25} h={13}>
                {[0, 1, 2, 3, 4, 5, 6, 7].map(i => (
                  <g key={i}>
                    <rect x={i * 3} y="0" width="2" height={10 - i} fill="#6b7d12" />
                    <rect x={i * 3} y={11 - i} width="2" height={2 + i} fill="#12405e" />
                  </g>
                ))}
              </Svg>
              <Traffic>22/1 kb</Traffic>
            </StatusCell>
            <Svg w={13} h={19}><path d="M1 18L13 2M5 18l8-11M9 18l4-6" stroke="#8f8f8f" strokeWidth="1.500" /></Svg>
          </StatusBar>

          <TaskBar>
            <Svg w={420} h={8}>
              <circle cx="27" cy="14" r="13" fill="#a9c3dc" stroke="#1c3a78" />
              <rect x="60" y="1" width="50" height="9" fill="#9fb0c2" stroke="#d9e2ea" />
              <path d="M84 8q4-6 14-4l4 4z" fill="#e6a552" />
              <rect x="112" y="1" width="3" height="9" fill="#8fa2b5" />
              <rect x="138" y="6" width="14" height="3" fill="#e8c46c" />
              <rect x="308" y="1" width="57" height="9" fill="#dfe6ec" stroke="#f4f7fa" />
              <circle cx="337" cy="14" r="11" fill="#173a4c" />
            </Svg>
          </TaskBar>
        </Main>
        <Edge />
      </Page>
    </>
  );
}
